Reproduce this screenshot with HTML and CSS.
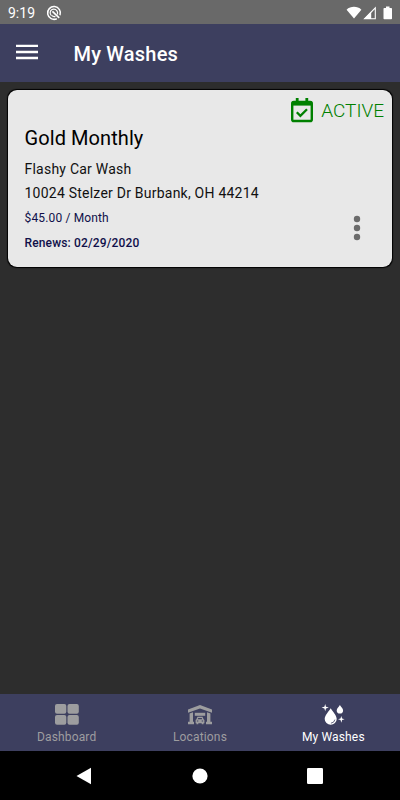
FILE: index.html
```html
<!DOCTYPE html>
<html lang="en">
<head>
  <meta charset="UTF-8" />
  <meta name="viewport" content="width=device-width, initial-scale=1.0" />
  <title>My Washes</title>
  <link rel="stylesheet" href="styles.css">
</head>
<body>
  <div class="status-bar">
    <span class="time">9:19</span>
    <svg class="app-icon" width="16" height="16" viewBox="0 0 16 16" fill="none" stroke="#fff">
      <path d="M10.8 13.7A6.4 6.4 0 1 1 14 10.2" stroke-width="1.5" />
      <path d="M5.4 10.6A3.7 3.7 0 1 1 11.5 7.2V9.4" stroke-width="1.2" />
      <path d="M6.4 6.4L13.2 12.8" stroke-width="1.7" />
      <path d="M5.6 10.4Q7.2 12 9.4 11.4" stroke-width="1.2" />
    </svg>
    <svg class="signals" width="48" height="16" viewBox="0 0 48 16">
      <path d="M0.6 4.7C4.6 0.9 11.4 0.9 15.4 4.7L8 13.6Z" fill="#fff" />
      <path d="M29.3 2.8V13.8H18.6Z" fill="none" stroke="#fff" stroke-width="1.1" />
      <path d="M25.2 6.6V14H18Z" fill="#fff" />
      <path d="M38.3 3h1.700V1.500h3.500V3h1.700q.8 0 .8.8v9.700q0 .8-.8.8h-6.900q-.8 0-.8-.8V3.800q0-.8.8-.8z" fill="#fff" />
    </svg>
  </div>

  <header>
    <svg class="menu" width="22" height="16" viewBox="0 0 22 16" fill="#fff">
      <path d="M0 .7h22v2.4H0zM0 6.800h22v2.400H0zM0 12.800h22v2.400H0z" />
    </svg>
    <h1>My Washes</h1>
  </header>

  <main>
    <section class="card">
      <div class="status">
        <svg width="24" height="26" viewBox="0 0 24 26" fill="none" stroke="#008000">
          <path d="M7.2 1v4M16.8 1v4" stroke-width="2.8" />
          <rect x="2.2" y="5" width="19.6" height="19" rx="1.6" stroke-width="2.4" />
          <path d="M2 6.600h20" stroke-width="4" />
          <path d="M6.800 15.200l3.600 3.600 6.600-6.600" stroke-width="2.300" />
        </svg>
        <span>ACTIVE</span>
      </div>
      <h2>Gold Monthly</h2>
      <p class="place">Flashy Car Wash</p>
      <p class="place">10024 Stelzer Dr Burbank, OH 44214</p>
      <p class="price">$45.00 / Month</p>
      <p class="renews">Renews: 02/29/2020</p>
      <svg class="more" width="8" height="26" viewBox="0 0 8 26" fill="#6b6b6b">
        <circle cx="4" cy="4" r="3.2" />
        <circle cx="4" cy="13" r="3.2" />
        <circle cx="4" cy="22" r="3.2" />
      </svg>
    </section>
  </main>

  <nav class="tabs">
    <div class="tab">
      <svg width="26" height="24" viewBox="0 0 26 24" fill="currentColor">
        <rect x="1" y="2" width="11.3" height="9.8" rx="2" />
        <rect x="13.5" y="2" width="11.3" height="9.8" rx="2" />
        <rect x="1" y="13" width="11.3" height="9.8" rx="2" />
        <rect x="13.5" y="13" width="11.3" height="9.8" rx="2" />
      </svg>
      <span>Dashboard</span>
    </div>
    <div class="tab">
      <svg width="26" height="24" viewBox="0 0 26 24" fill="currentColor">
        <path d="M1 7.600L13 3l12 4.600v3.200L13 6.400 1 10.800z" />
        <path d="M2.600 11.400L6 10.300v9.500h1v2.400H1v-2.400h1.600zM23.400 11.400L20 10.300v9.500h-1v2.400h6v-2.400h-1.600z" />
        <path d="M7.800 10.800h10.400v3H7.800z" />
        <path fill-rule="evenodd" d="M10.500 14.800h5l1.100 2.500.8.6v3.400h-.9v1h-1.800v-1h-3.400v1H9.500v-1h-.9v-3.400l.8-.6zM11.300 15.900l-.6 1.400h4.600l-.6-1.400zM9.900 18.400v1.200h1.400v-1.200zM14.700 18.400v1.200h1.400v-1.200z" />
      </svg>
      <span>Locations</span>
    </div>
    <div class="tab active">
      <svg width="26" height="24" viewBox="0 0 26 24" fill="currentColor">
        <path d="M10.700 6.200C12.500 9.400 16.700 13.200 16.700 17a6 5.800 0 0 1-12 0C4.700 13.200 8.900 9.400 10.700 6.200z" />
        <path d="M19.900 3c1.200 2 3.200 3.400 3.200 5.400a3.200 3.100 0 0 1-6.400 0C16.700 6.400 18.700 5 19.900 3z" />
        <path d="M5.200 2l.8 2.700 2.800.9-2.800.9-.8 2.800-.8-2.800-2.800-.9 2.800-.9z" />
        <path d="M21.300 14l.8 2.500 2.500.8-2.500.8-.8 2.600-.8-2.600-2.500-.8 2.500-.8z" />
        <path d="M10.900 21.200q3.400-.4 4-3.600" fill="none" stroke="#3d3f5f" stroke-width=".8" />
      </svg>
      <span>My Washes</span>
    </div>
  </nav>

  <div class="system-nav">
    <svg width="16" height="18" viewBox="0 0 16 18" fill="#fff"><path d="M15 .8v16.400L.5 9z" /></svg>
    <svg width="16" height="16" viewBox="0 0 16 16" fill="#fff"><circle cx="8" cy="8" r="7.600" /></svg>
    <svg width="16" height="16" viewBox="0 0 16 16" fill="#fff"><rect width="16" height="16" rx="1.200" /></svg>
  </div>
</body>
</html>
```
FILE: styles.css
```css
:root {
  --bar: #3d3f5f;
  --page: #2d2d2d;
  --card: #e8e8e8;
  --navy: #10104a;
}
* {
  box-sizing: border-box;
}
body {
  margin: 0;
  height: 800px;
  display: flex;
  flex-direction: column;
  background: var(--page);
  font-family: Roboto, sans-serif;
  color: #000;
}
h1, h2, p {
  margin: 0;
  font-weight: 400;
}
svg {
  display: block;
  flex-shrink: 0;
}
.status-bar {
  height: 24px;
  padding: 1px 6px 0 8px;
  display: flex;
  align-items: center;
  background: #696969;
  color: #fff;
  font-size: 14px;
}
.app-icon {
  margin-left: 11px;
}
.signals {
  margin-left: auto;
}
header {
  height: 58px;
  padding: 0 16px;
  display: flex;
  align-items: center;
  gap: 35.5px;
  background: var(--bar);
  color: #fff;
}
.menu {
  margin-bottom: 2px;
}
h1 {
  padding-top: 2px;
  font-size: 20px;
  font-weight: 500;
  letter-spacing: 0.2px;
}
main {
  flex: 1;
  padding: 8px;
}
.card {
  position: relative;
  height: 177px;
  padding: 7px 8px 0 16.5px;
  background: var(--card);
  border-radius: 9px;
  box-shadow: 0 0 1px 0.5px #000;
}
.status {
  display: flex;
  justify-content: flex-end;
  align-items: center;
  gap: 7px;
  height: 27px;
  color: #008000;
  font-size: 19px;
  font-weight: 300;
}
.status svg {
  margin-bottom: 2px;
}
h2 {
  margin-bottom: 5px;
  font-size: 20px;
  line-height: 28px;
  letter-spacing: 0.08px;
}
.place {
  color: #111;
  font-size: 14px;
  line-height: 24px;
  letter-spacing: 0.23px;
}
.price, .renews {
  color: var(--navy);
  font-size: 12px;
  line-height: 25px;
  letter-spacing: 0.15px;
}
.price {
  padding-top: 1px;
}
.renews {
  font-weight: 500;
}
.more {
  position: absolute;
  right: 31px;
  bottom: 26px;
}
.tabs {
  height: 57px;
  display: flex;
  background: var(--bar);
}
.tab {
  flex: 1;
  padding-top: 8px;
  display: flex;
  flex-direction: column;
  align-items: center;
  gap: 4px;
  color: #9d9d9f;
  font-size: 12px;
  line-height: 15px;
  letter-spacing: 0.15px;
}
.tab.active {
  color: #fff;
}
.system-nav {
  height: 49px;
  padding: 0 77px 0 76px;
  display: flex;
  justify-content: space-between;
  align-items: center;
  background: #000;
}
```
